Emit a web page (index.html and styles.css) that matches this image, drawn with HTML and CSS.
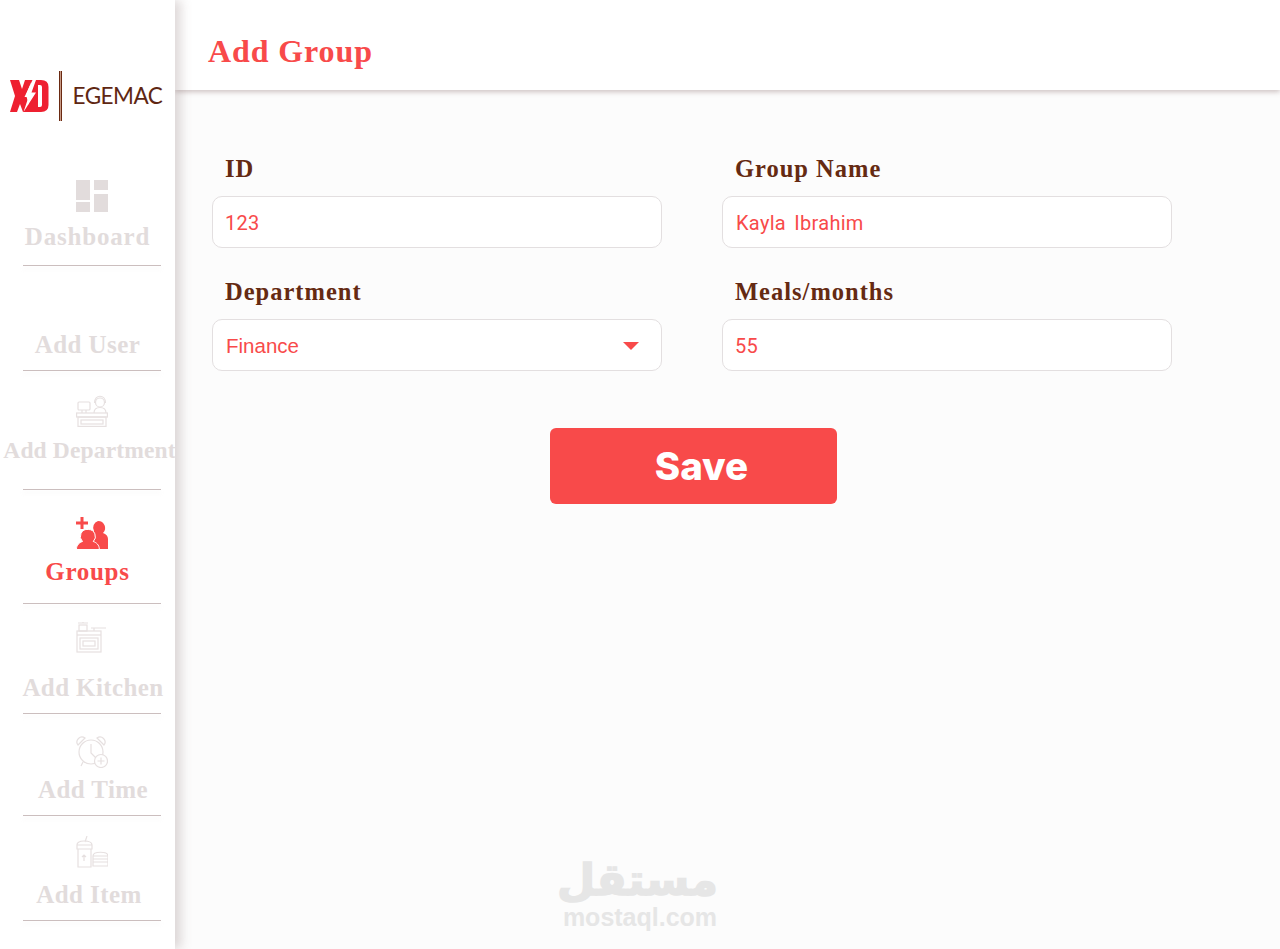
FILE: index.html
```html
<!DOCTYPE html>
<html lang="en">
<head>
<meta charset="utf-8">
<title>Add Group</title>
<link rel="stylesheet" href="styles.css">
</head>
<body>
<div class="app">
  <aside class="sidebar">
    <div class="logo">
      <svg class="xd" viewBox="0 0 39 32" width="39" height="32">
        <path fill="#ee2030" d="M0 0H9L12 9L15 0H22L16 15L21 32H13L10 24L7 32H0L5 16Z"/>
        <path fill="#ee2030" fill-rule="evenodd" d="M21 0H31Q38.500 0 38.500 7V25Q38.500 32 31 32H18ZM28 5V27H30Q32 27 32 25V7Q32 5 30 5Z"/>
        <path fill="#fff" d="M22.500 0L14.500 17H18.500L13.500 32L26 12.500H21.500L26 0Z"/>
      </svg>
      <span class="logo-rule"></span>
      <span class="egemac">EGEMAC</span>
    </div>
    <nav class="nav">
      <a class="item item-dash">
        <svg class="icon" viewBox="0 0 32 32" width="32" height="32"><path fill="#e2dcdc" d="M0 0h14v20H0zM18 0h14v10H18zM0 22h14v10H0zM18 14h14v18H18z"/></svg>
        <span class="label">Dashboard</span>
      </a>
      <a class="item item-user">
        <span class="label">Add User</span>
      </a>
      <a class="item item-dept">
        <svg class="icon" viewBox="0 0 32 32" width="32" height="32" fill="none" stroke="#e6e0e0" stroke-width="1.2"><rect x="2" y="7" width="12" height="8" rx="1"/><path d="M6 15v3M10 15v3"/><circle cx="24" cy="7.500" r="4.500"/><path d="M18.500 8c0-9 11-9 11 0M18 18c0-4 3-5.500 6-5.500s6 1.500 6 5.500"/><rect x="0.600" y="18" width="30.800" height="4"/><rect x="2" y="22" width="28" height="9.400"/><rect x="5" y="25" width="22" height="4"/></svg>
        <span class="label">Add Department</span>
      </a>
      <a class="item item-groups active">
        <svg class="icon" viewBox="0 0 32 32" width="32" height="32"><path fill="#f84a4a" d="M4.500 0h3v4.500H12v3H7.500V12h-3V7.500H0v-3h4.500z"/><path fill="#f84a4a" d="M22 4a7 7 0 0 1 5 12c3 1 5 3 5 6v10H18V14a7 7 0 0 1 4-10z"/><path fill="#f84a4a" stroke="#fff" d="M12.300 12.500a7 7 0 0 1 5 12c3 1 6 3.500 6 7.500v.5H.500V32c0-4 3-6.500 6-7.500a7 7 0 0 1 5.800-12z"/></svg>
        <span class="label">Groups</span>
      </a>
      <a class="item item-kitchen">
        <svg class="icon" viewBox="0 0 32 32" width="32" height="32" fill="none" stroke="#e6e0e0" stroke-width="1.2"><rect x="3" y="3" width="8" height="6"/><path d="M2 1h10M7 0v1M15 6h15M18 9V6"/><rect x="1" y="9" width="24" height="21"/><path d="M1 13h24"/><rect x="4" y="16" width="18" height="11"/><rect x="7" y="19" width="12" height="5"/></svg>
        <span class="label">Add Kitchen</span>
      </a>
      <a class="item item-time">
        <svg class="icon" viewBox="0 0 32 32" width="32" height="32" fill="none" stroke="#e6e0e0" stroke-width="1.2"><circle cx="15" cy="16" r="12"/><path d="M15 8v9l5 5M7 26l-2 4M2 9a5 5 0 0 1 7-7zM21 2a5 5 0 0 1 7 7z"/><circle cx="25" cy="25" r="6.500" fill="#fff"/><path d="M25 21.500v7M21.500 25h7"/></svg>
        <span class="label">Add Time</span>
      </a>
      <a class="item item-food">
        <svg class="icon" viewBox="0 0 32 32" width="32" height="32" fill="none" stroke="#e6e0e0" stroke-width="1.2"><path d="M9 6l2-6M1 9c0-3 3-4 7-4s8 1 8 4zM1 9h15v4H1zM2 13h13v18H2zM8 19v6M6 21l2-2 2 2"/><path d="M17 20c0-5 15-5 15 0zM17 20h15v3H17zM17 23h15v3H17zM17 26h15v4H17z"/></svg>
        <span class="label">Add Item</span>
      </a>
    </nav>
  </aside>
  <div class="content">
    <header class="topbar"><h1 class="title">Add Group</h1></header>
    <main class="main">
      <form class="form">
        <div class="field">
          <div class="field-label">ID</div>
          <div class="control value-spaced">123</div>
        </div>
        <div class="field">
          <div class="field-label">Group Name</div>
          <div class="control value-name">Kayla Ibrahim</div>
        </div>
        <div class="field">
          <div class="field-label">Department</div>
          <div class="control select"><span class="value-select">Finance</span><span class="caret"></span></div>
        </div>
        <div class="field">
          <div class="field-label">Meals/months</div>
          <div class="control value-spaced">55</div>
        </div>
      </form>
      <div class="actions"><button class="save" type="button">Save</button></div>
      <div class="watermark">
        <div class="wm-ar" lang="ar" dir="rtl">مستقل</div>
        <div class="wm-en">mostaql.com</div>
      </div>
    </main>
  </div>
</div>
</body>
</html>
```

FILE: styles.css
```css
* { box-sizing: border-box; }
html, body { margin: 0; height: 100%; }
body { font-family: "Liberation Serif", serif; background: #fcfcfc; overflow: hidden; }
.app { display: flex; height: 949px; }

.sidebar {
  width: 175px;
  flex: none;
  background: #fff;
  position: relative;
  z-index: 2;
  box-shadow: 6px 0 10px rgba(130, 110, 110, .26);
}
.logo { height: 160px; display: flex; align-items: flex-start; padding: 71px 0 0 10px; }
.xd { margin-top: 9px; flex: none; }
.logo-rule { width: 3px; height: 50px; margin-left: 9.5px; background: #c89c88; border-left: 1px solid #6a2a12; border-right: 1px solid #6a2a12; flex: none; }
.egemac { font: 400 22.5px/1 "Lato", sans-serif; color: #5f2712; margin: 14px 0 0 11px; letter-spacing: -.5px; }

.nav { display: flex; flex-direction: column; }
.item {
  display: flex;
  flex-direction: column;
  align-items: center;
  position: relative;
}
.item::after {
  content: "";
  position: absolute;
  left: 23px;
  bottom: 0;
  width: 138px;
  height: 1px;
  background: #cbbebe;
  box-shadow: 0 3px 4px rgba(200, 190, 190, .18);
}
.icon { margin-left: 9px; display: block; }
.label { font: 700 25px/30px "Liberation Serif", serif; color: #e2dcdc; white-space: nowrap; letter-spacing: .4px; }
.active .label { color: #f84a4a; letter-spacing: .7px; }

.item-dash { height: 106px; padding-top: 20px; }
.item-dash .label { margin-top: 10px; letter-spacing: .8px; }
.item-user { height: 105px; padding-top: 64px; }
.item-dept { height: 119px; padding-top: 24px; }
.item-dept .label { margin-top: 8px; padding-left: 4px; font-size: 23.5px; letter-spacing: .15px; }
.item-groups { height: 114px; padding-top: 27px; }
.item-groups .label { margin-top: 8px; }
.item-kitchen { height: 110px; padding-top: 18px; }
.item-kitchen .label { margin-top: 19px; padding-left: 11px; }
.item-time { height: 102px; padding-top: 22px; }
.item-time .label { margin-top: 7px; padding-left: 11px; }
.item-food { height: 105px; padding-top: 20px; }
.item-food .label { margin-top: 12px; padding-left: 3px; }

.content { flex: 1; display: flex; flex-direction: column; min-width: 0; }
.topbar {
  height: 90px;
  flex: none;
  background: #fff;
  display: flex;
  align-items: center;
  padding: 0 0 0 33px;
  box-shadow: 0 2px 5px rgba(120, 90, 90, .35);
  position: relative;
}
.title { margin: 0; font: 700 32px/1 "Liberation Serif", serif; color: #f84a4a; padding-top: 11px; letter-spacing: .9px; }

.main { flex: 1; position: relative; padding: 65px 0 0 37px; }
.form { display: grid; grid-template-columns: 450px 450px; column-gap: 60px; row-gap: 30px; }
.field-label { font: 700 24.5px/28px "Liberation Serif", serif; color: #652a12; padding-left: 13px; margin-bottom: 13px; letter-spacing: 1px; }
.control {
  height: 52px;
  background: #fff;
  border: 1px solid #e3dfe0;
  border-radius: 10px;
  display: flex;
  align-items: center;
  padding: 2px 13px 0;
  color: #f84a4a;
  font: 400 20px/1 "Roboto", sans-serif;
}
.value-spaced { letter-spacing: .3px; padding-left: 12px; }
.value-name { word-spacing: 3px; letter-spacing: .3px; }
.select { justify-content: space-between; padding-right: 22px; }
.value-select { font: 400 20.5px/1 "Liberation Sans", sans-serif; }
.caret { width: 0; height: 0; border-left: 8px solid transparent; border-right: 8px solid transparent; border-top: 8px solid #f84a4a; }

.actions { padding: 57px 0 0 338px; }
.save {
  width: 287px;
  height: 76px;
  border: 0;
  border-radius: 6px;
  background: #f84a4a;
  color: #fff;
  font: 800 38.5px/1 "Inter", sans-serif;
  padding: 0 0 0 16px;
}

.watermark { position: absolute; left: 387px; top: 762px; width: 156px; text-align: center; color: #e6e6e6; }
.wm-ar { font: 700 44px/49px "DejaVu Sans", sans-serif; padding-top: 3px; -webkit-text-stroke: 1.5px #e6e6e6; }
.wm-en { font: 700 25px/26px "Liberation Sans", sans-serif; }
```
